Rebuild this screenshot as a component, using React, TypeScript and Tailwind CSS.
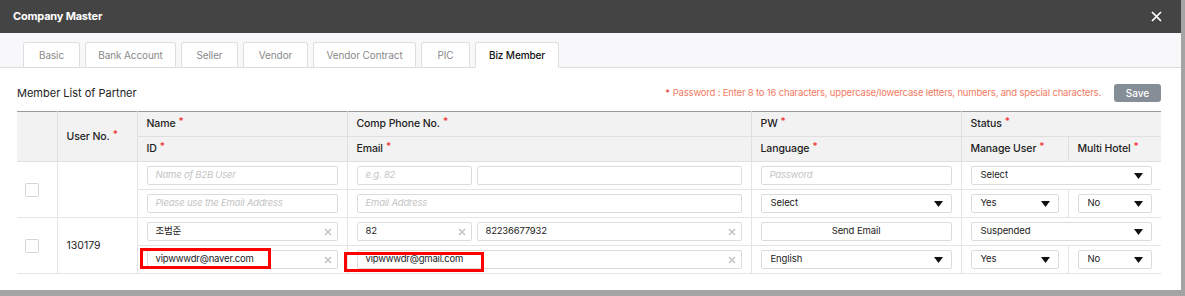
import React from "react";

const FONT = { fontFamily: 'Inter, "Noto Sans CJK KR", sans-serif' };

function Req() {
  return <span className="text-[#ee3333] ml-[3px] text-[10px] relative top-[-2px]">*</span>;
}

function ClearX() {
  return (
    <svg width="8" height="8" viewBox="0 0 8 8" className="shrink-0">
      <path d="M1 1L7 7M7 1L1 7" stroke="#c4c4c4" strokeWidth="1.6" />
    </svg>
  );
}

function Arrow() {
  return (
    <svg width="9" height="6" viewBox="0 0 9 6" className="shrink-0">
      <polygon points="0,0 9,0 4.5,6" fill="#111" />
    </svg>
  );
}

function Input({
  value,
  placeholder,
  clear,
  className = "",
}: {
  value?: string;
  placeholder?: string;
  clear?: boolean;
  className?: string;
}) {
  return (
    <div
      className={`h-[19px] border border-[#dcdcdc] rounded-[2px] bg-white flex items-center pl-[8px] pr-[5px] text-[9.5px] tracking-[-0.2px] ${className}`}
    >
      {value ? (
        <span className="flex-1 text-[#222] whitespace-nowrap">{value}</span>
      ) : (
        <span className="flex-1 italic text-[#c4c4c4] whitespace-nowrap">{placeholder ?? ""}</span>
      )}
      {clear && <ClearX />}
    </div>
  );
}

function Select({ value, className = "" }: { value: string; className?: string }) {
  return (
    <div
      className={`h-[19px] border border-[#dcdcdc] rounded-[2px] bg-white flex items-center pl-[9px] pr-[8px] text-[9.5px] tracking-[-0.1px] text-[#222] ${className}`}
    >
      <span className="flex-1 whitespace-nowrap">{value}</span>
      <Arrow />
    </div>
  );
}

const tabs = [
  { label: "Basic", w: "w-[57px]" },
  { label: "Bank Account", w: "w-[91px]" },
  { label: "Seller", w: "w-[57px]" },
  { label: "Vendor", w: "w-[65px]" },
  { label: "Vendor Contract", w: "w-[103px]" },
  { label: "PIC", w: "w-[49px]" },
  { label: "Biz Member", w: "w-[84px]", active: true },
];

export default function App() {
  const th =
    "border border-[#dfdfdf] text-left font-medium text-[10.5px] tracking-[-0.1px] text-[#222] px-[9px] h-[25px] bg-[#f2f2f2]";
  const tdBase = "border border-[#e4e4e4] h-[28px] align-middle";
  const td = `${tdBase} px-[9px]`;
  const tdCheck = `${tdBase} border-l-0 pl-[8px] pr-0`;
  return (
    <div style={FONT} className="relative w-[1185px] h-[296px] bg-[#a4a4a4] overflow-hidden">
      <div className="w-[1181px] h-[290px] bg-white flex flex-col">
        {/* header */}
        <div className="h-[33px] bg-[#444444] flex items-center justify-between pl-[13px] pr-[19px] shrink-0">
          <span className="text-white font-bold text-[11px] tracking-[-0.2px]">Company Master</span>
          <svg width="11" height="11" viewBox="0 0 11 11">
            <path d="M1 1L10 10M10 1L1 10" stroke="#fff" strokeWidth="1.7" />
          </svg>
        </div>
        {/* tabs */}
        <div className="h-[35px] bg-[#f8f7fa] border-b border-[#dcdcdc] pt-[9px] pl-[23px] flex gap-[5px] shrink-0">
          {tabs.map((t) => (
            <div
              key={t.label}
              className={`${t.w} h-[26px] -mb-px rounded-t-[3px] border border-[#dedede] flex items-center justify-center text-[10px] tracking-[-0.1px] bg-white ${
                t.active ? "border-b-white text-[#111] font-medium" : "border-b-[#dcdcdc] text-[#8a8a8a]"
              }`}
            >
              {t.label}
            </div>
          ))}
        </div>
        {/* content */}
        <div className="pl-[17px] pr-[20px] pt-[16px]">
          <div className="flex items-center h-[18px] mb-[9px]">
            <span className="text-[11px] text-[#222] flex-1">Member List of Partner</span>
            <span className="text-[9.5px] tracking-[-0.18px] text-[#f27a62] mr-[13px]">
              <span className="text-[#e9413a] mr-[3px]">*</span>Password : Enter 8 to 16 characters,
              uppercase/lowercase letters, numbers, and special characters.
            </span>
            <button className="w-[47px] h-[18px] rounded-[3px] bg-[#858d96] text-white text-[10px] font-medium">
              Save
            </button>
          </div>
          <table className="table-fixed border-collapse w-[1144px] border-t border-b border-t-[#9a9a9a] border-b-[#9a9a9a]">
            <colgroup>
              <col className="w-[40px]" />
              <col className="w-[80px]" />
              <col className="w-[210px]" />
              <col className="w-[404px]" />
              <col className="w-[210px]" />
              <col className="w-[107px]" />
              <col className="w-[93px]" />
            </colgroup>
            <thead>
              <tr>
                <th rowSpan={2} className={`${th} border-l-0 border-t-[#9a9a9a]`}></th>
                <th rowSpan={2} className={`${th} border-t-[#9a9a9a]`}>
                  User No.<Req />
                </th>
                <th className={`${th} border-t-[#9a9a9a]`}>
                  Name<Req />
                </th>
                <th className={`${th} border-t-[#9a9a9a]`}>
                  Comp Phone No.<Req />
                </th>
                <th className={`${th} border-t-[#9a9a9a]`}>
                  PW<Req />
                </th>
                <th colSpan={2} className={`${th} border-r-0 border-t-[#9a9a9a]`}>
                  Status<Req />
                </th>
              </tr>
              <tr>
                <th className={th}>
                  ID<Req />
                </th>
                <th className={th}>
                  Email<Req />
                </th>
                <th className={th}>
                  Language<Req />
                </th>
                <th className={th}>
                  Manage User<Req />
                </th>
                <th className={`${th} border-r-0`}>
                  Multi Hotel<Req />
                </th>
              </tr>
            </thead>
            <tbody className="text-[10px]">
              <tr>
                <td rowSpan={2} className={tdCheck}>
                  <div className="w-[14px] h-[14px] border border-[#d6d6d6] rounded-[2px] bg-white" />
                </td>
                <td rowSpan={2} className={td}></td>
                <td className={td}>
                  <Input placeholder="Name of B2B User" />
                </td>
                <td className={td}>
                  <div className="flex gap-[5px]">
                    <Input placeholder="e.g. 82" className="w-[115px]" />
                    <Input className="flex-1" />
                  </div>
                </td>
                <td className={td}>
                  <Input placeholder="Password" />
                </td>
                <td colSpan={2} className={`${td} border-r-0`}>
                  <Select value="Select" />
                </td>
              </tr>
              <tr>
                <td className={td}>
                  <Input placeholder="Please use the Email Address" />
                </td>
                <td className={td}>
                  <Input placeholder="Email Address" />
                </td>
                <td className={td}>
                  <Select value="Select" />
                </td>
                <td className={td}>
                  <Select value="Yes" />
                </td>
                <td className={`${td} border-r-0`}>
                  <Select value="No" />
                </td>
              </tr>
              <tr>
                <td rowSpan={2} className={tdCheck}>
                  <div className="w-[14px] h-[14px] border border-[#d6d6d6] rounded-[2px] bg-white" />
                </td>
                <td rowSpan={2} className={`${td} text-[10.5px] text-[#222]`}>
                  130179
                </td>
                <td className={td}>
                  <Input value="조범준" clear />
                </td>
                <td className={td}>
                  <div className="flex gap-[5px]">
                    <Input value="82" clear className="w-[115px]" />
                    <Input value="82236677932" clear className="flex-1" />
                  </div>
                </td>
                <td className={td}>
                  <div className="h-[19px] border border-[#dcdcdc] rounded-[2px] bg-white flex items-center justify-center text-[9.5px] tracking-[-0.1px] text-[#222]">
                    Send Email
                  </div>
                </td>
                <td colSpan={2} className={`${td} border-r-0`}>
                  <Select value="Suspended" />
                </td>
              </tr>
              <tr>
                <td className={td}>
                  <Input value="vipwwwdr@naver.com" clear />
                </td>
                <td className={td}>
                  <Input value="vipwwwdr@gmail.com" clear />
                </td>
                <td className={td}>
                  <Select value="English" />
                </td>
                <td className={td}>
                  <Select value="Yes" />
                </td>
                <td className={`${td} border-r-0`}>
                  <Select value="No" />
                </td>
              </tr>
            </tbody>
          </table>
        </div>
      </div>
      {/* red highlight boxes */}
      <div className="absolute left-[140px] top-[248px] w-[131px] h-[21px] border-[3px] border-[#ff0000]" />
      <div className="absolute left-[344px] top-[252px] w-[140px] h-[20px] border-[3px] border-[#ff0000]" />
    </div>
  );
}
